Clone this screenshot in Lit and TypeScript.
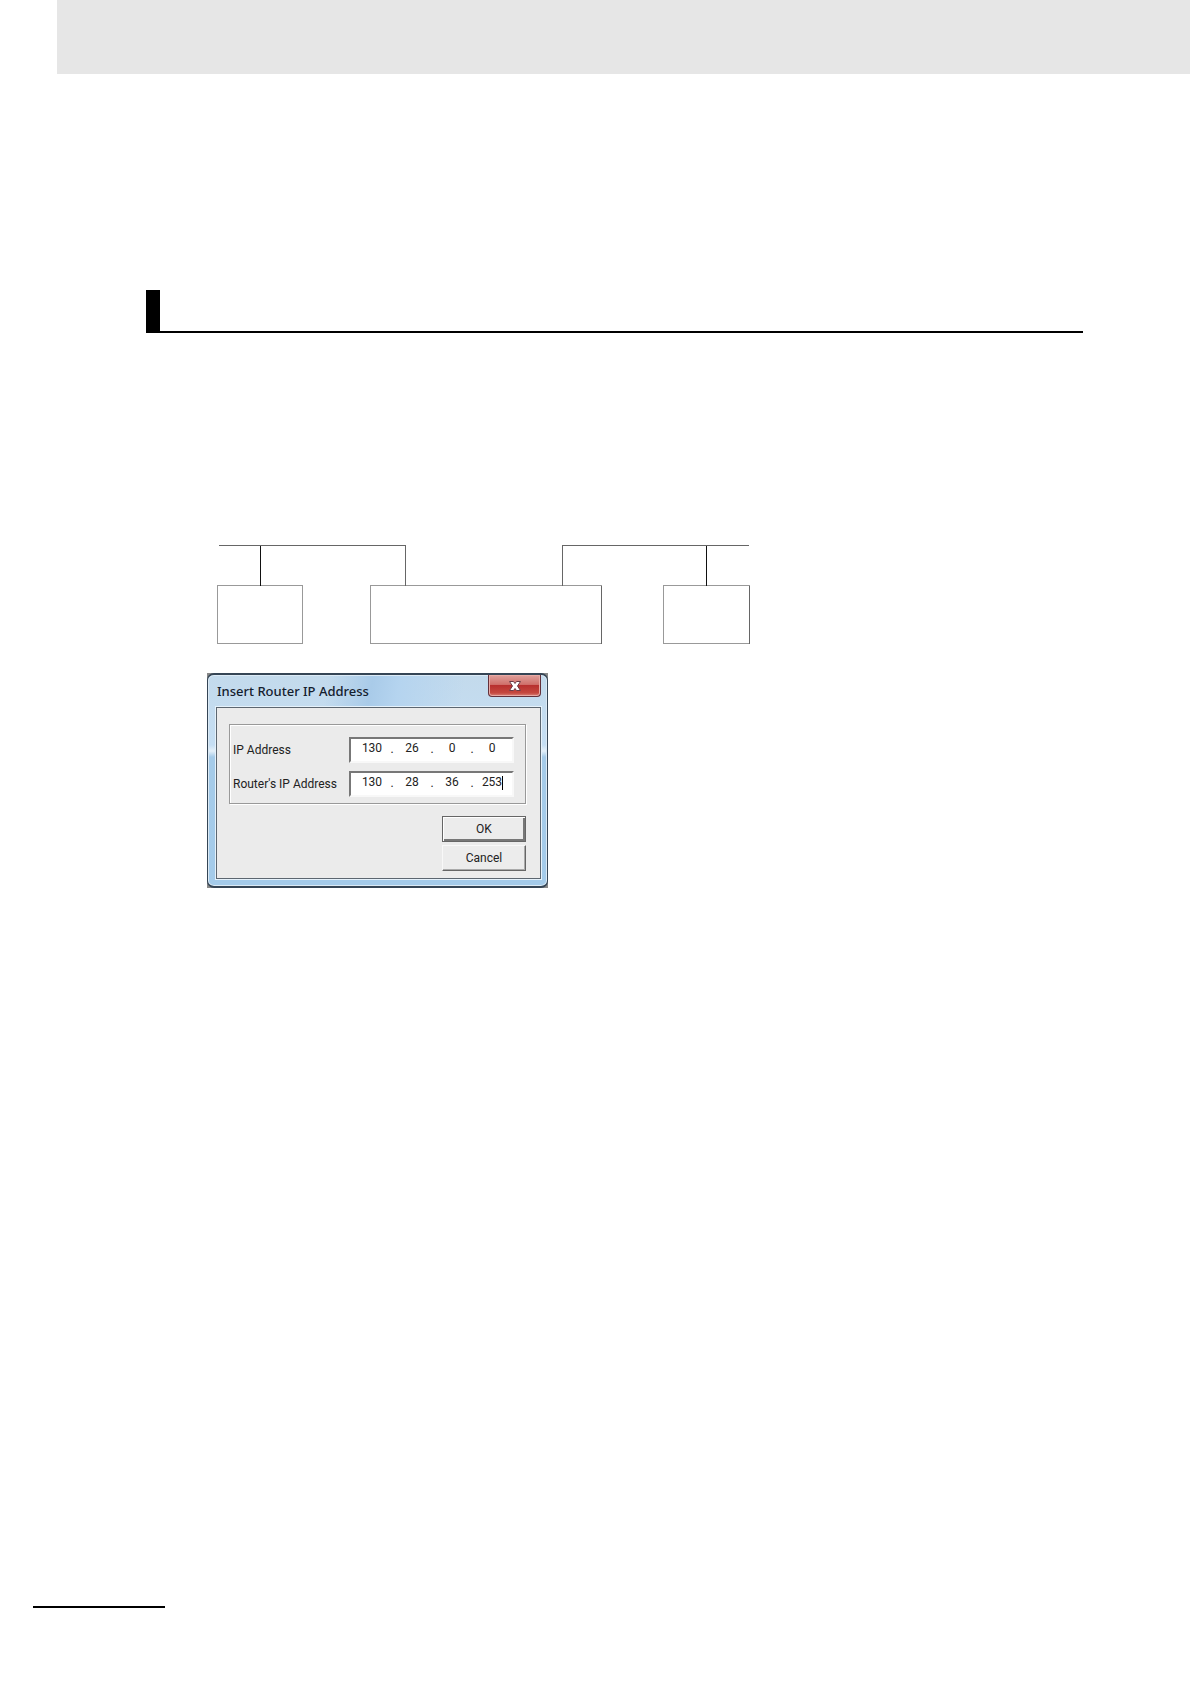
import { LitElement, html, css } from "lit";
import { customElement, property } from "lit/decorators.js";

@customElement("network-diagram")
class NetworkDiagram extends LitElement {
  static styles = css`
    :host { display: block; }
    .drawing { display: block; width: 536px; height: 101px; max-width: 100%; }
    .box { fill: #fff; stroke: #999; }
    .bus { fill: none; stroke: #666; }
    .drop { stroke: #111; }
  `;

  render() {
    return html`
      <svg class="drawing" viewBox="0 0 536 101" shape-rendering="crispEdges" role="img" aria-label="Two networks joined by a router">
        <rect class="box" x="1.5" y="41.5" width="85" height="58"></rect>
        <rect class="box" x="154.5" y="41.5" width="231" height="58"></rect>
        <rect class="box" x="447.5" y="41.5" width="86" height="58"></rect>
        <path class="bus" d="M385.5 41.5v58M533.5 41.5v58"></path>
        <path class="bus" d="M3 1.5h186.500v40M533 1.500H346.500v40"></path>
        <path class="drop" d="M44.500 2v40M490.500 2v40"></path>
      </svg>
    `;
  }
}

@customElement("ip-field")
class IpField extends LitElement {
  @property() label = "";
  @property({ type: Array }) octets: string[] = [];
  @property({ type: Boolean }) active = false;

  static styles = css`
    :host { display: block; font-family: Roboto, "Liberation Sans", sans-serif; font-size: 12px; color: #222; }
    .row { display: flex; align-items: center; justify-content: space-between; }
    .field {
      display: flex;
      box-sizing: border-box;
      width: 165px;
      height: 26px;
      padding: 0 5px 4px 6px;
      border: 2px solid;
      border-color: #777 #f8f8f8 #f8f8f8 #777;
      background: #fff;
    }
    .octet {
      flex: 1;
      min-width: 0;
      box-sizing: border-box;
      padding: 0;
      border: 0;
      outline: 0;
      background: none;
      font: inherit;
      font-size: 12px;
      color: inherit;
      text-align: center;
    }
    .dot { width: 10px; line-height: 20px; text-align: center; }
    .last { position: relative; display: flex; flex: 1; min-width: 0; }
    .caret { position: absolute; right: 4px; top: 3px; width: 1px; height: 14px; background: #000; }
  `;

  private octet(index: number) {
    return html`<input class="octet" id="octet-${index}" aria-label="${this.label} part ${index + 1}" .value=${this.octets[index] ?? ""} />`;
  }

  render() {
    return html`
      <div class="row">
        <label for="octet-0">${this.label}</label>
        <div class="field">
          ${this.octet(0)}<span class="dot">.</span>
          ${this.octet(1)}<span class="dot">.</span>
          ${this.octet(2)}<span class="dot">.</span>
          <span class="last">${this.octet(3)}${this.active ? html`<span class="caret"></span>` : ""}</span>
        </div>
      </div>
    `;
  }
}

@customElement("router-dialog")
class RouterDialog extends LitElement {
  static styles = css`
    :host { display: block; max-width: 341px; background: #888; }
    .window {
      padding: 0 6px 7px 8px;
      border: 1px solid #354555;
      border-top-width: 2px;
      border-bottom-width: 2px;
      border-radius: 7px;
      background:
        linear-gradient(100deg, transparent 35%, #a9cbe9 48%, #b5d4ef 56%, transparent 75%) top / 100% 31px no-repeat,
        linear-gradient(#c3daec, #c5def3 70px, #e4f0f9 76px, #a5cbe9 82px, #a4cbea);
      box-shadow: inset 0 0 0 1px #dceaf5;
    }
    .title-bar { display: flex; align-items: flex-start; justify-content: space-between; height: 32px; }
    .title { margin: 0; padding-left: 1px; font: 500 13px/32px "Noto Sans", "Open Sans", sans-serif; color: #14202e; }
    .close {
      display: flex;
      align-items: center;
      justify-content: center;
      width: 53px;
      height: 22px;
      padding: 0;
      border: 1px solid #63303a;
      border-top: 0;
      border-radius: 0 0 4px 4px;
      background: linear-gradient(#dfa09b, #d0706b 45%, #b8302f 50%, #c5483f 85%, #d9827a);
      box-shadow: inset 0 0 0 1px #e8aaa5;
    }
    .cross { width: 14px; height: 12px; }
    .body { padding: 16px 14px 7px 12px; border: 1px solid #5c6670; box-shadow: 0 0 0 1px #e6f2fb; background: #ebebeb; }
    .group {
      display: flex;
      flex-direction: column;
      gap: 8px;
      padding: 12px 11px 6px 3px;
      border: 1px solid #999;
      box-shadow: inset 1px 1px #fff, 1px 1px #fff;
    }
    .actions { display: flex; flex-direction: column; align-items: flex-end; gap: 3px; margin-top: 12px; }
    .action {
      width: 84px;
      height: 26px;
      padding: 0;
      border: 1px solid;
      border-color: #f8f8f8 #666 #666 #f8f8f8;
      border-radius: 0;
      background: #ececec;
      box-shadow: inset -1px -1px #aaa;
      font: 12px/20px Roboto, "Liberation Sans", sans-serif;
      color: #222;
    }
    .default { border-color: #666; box-shadow: inset 1px 1px #fff, inset -2px -2px #777; }
  `;

  render() {
    return html`
      <section class="window" role="dialog" aria-labelledby="title">
        <header class="title-bar">
          <h2 class="title" id="title">Insert Router IP Address</h2>
          <button class="close" aria-label="Close">
            <svg class="cross" viewBox="0 0 14 12">
              <path d="M1.500 1.500h4L7 3.500l1.500-2h4L9.500 6l3 4.500h-4L7 8.500l-1.500 2h-4L4.500 6z" fill="#fff" stroke="#6c3c46"></path>
            </svg>
          </button>
        </header>
        <div class="body">
          <div class="group">
            <ip-field label="IP Address" .octets=${["130", "26", "0", "0"]}></ip-field>
            <ip-field label="Router's IP Address" .octets=${["130", "28", "36", "253"]} active></ip-field>
          </div>
          <div class="actions">
            <button class="action default">OK</button>
            <button class="action">Cancel</button>
          </div>
        </div>
      </section>
    `;
  }
}

@customElement("app-root")
class AppRoot extends LitElement {
  static styles = css`
    :host { display: flex; flex-direction: column; box-sizing: border-box; min-height: 100vh; padding-bottom: 76px; background: #fff; }
    .band { height: 74px; margin-left: 57px; background: #e6e6e6; }
    .content { flex: 1; padding: 216px 107px 0 146px; }
    .section-rule { height: 41px; border-left: 14px solid #000; border-bottom: 2px solid #000; }
    .figure { display: flex; flex-direction: column; gap: 28px; margin: 211px 0 0 61px; }
    .diagram { margin-left: 9px; }
    .footer-rule { width: 132px; height: 2px; margin-left: 33px; background: #000; }
  `;

  render() {
    return html`
      <header class="band"></header>
      <main class="content">
        <div class="section-rule"></div>
        <div class="figure">
          <network-diagram class="diagram"></network-diagram>
          <router-dialog></router-dialog>
        </div>
      </main>
      <footer class="footer-rule"></footer>
    `;
  }
}
